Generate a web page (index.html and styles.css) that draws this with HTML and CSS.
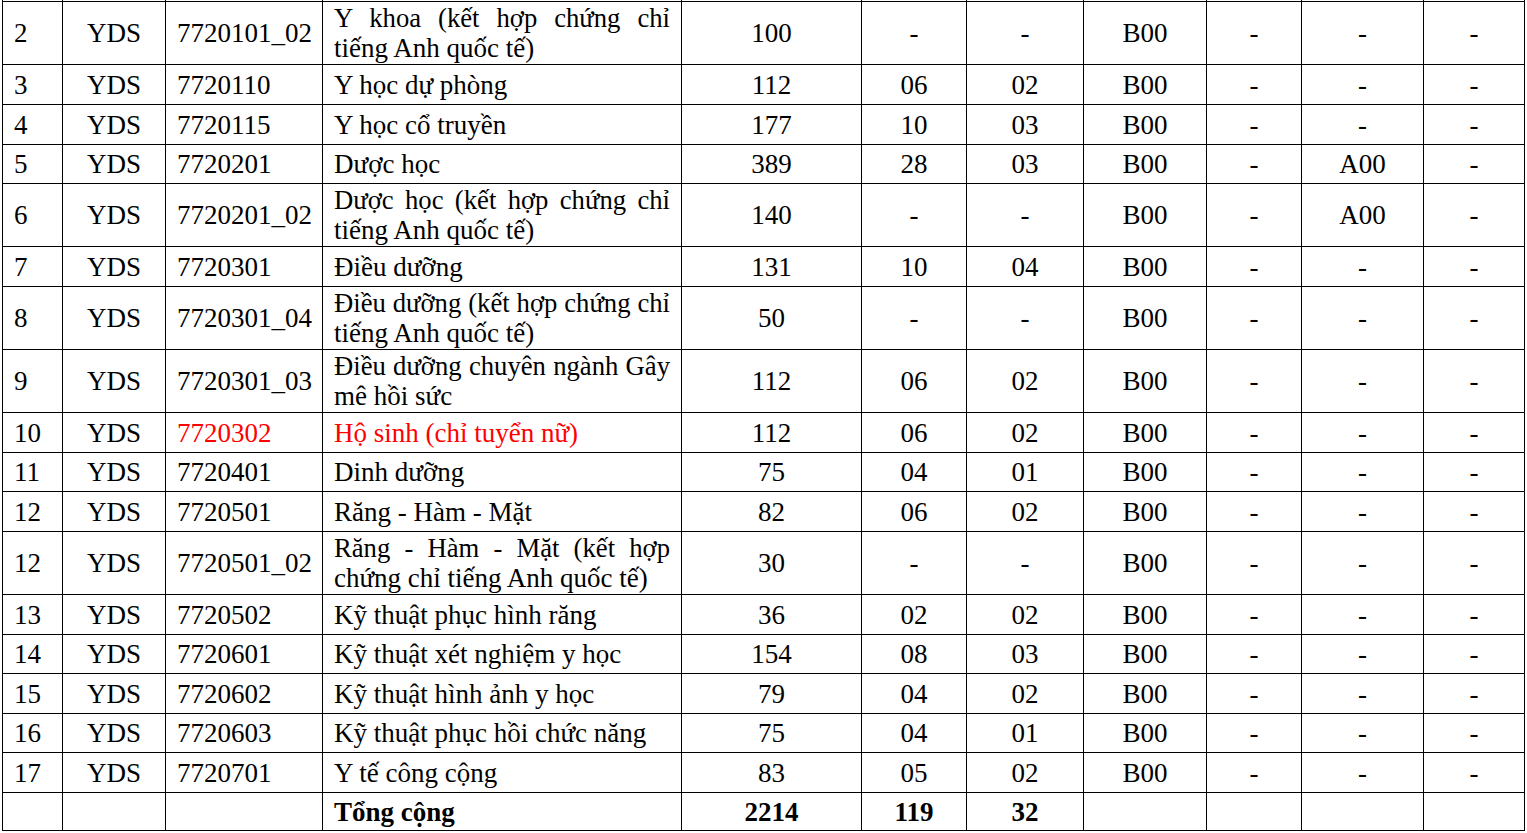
FILE: index.html
```html
<!DOCTYPE html>
<html lang="vi">
<head>
<meta charset="utf-8">
<title>Chỉ tiêu tuyển sinh</title>
<link rel="stylesheet" href="styles.css">
</head>
<body>
<table class="grid">
  <colgroup>
    <col class="c1"><col class="c2"><col class="c3"><col class="c4"><col class="c5"><col class="c6"><col class="c7"><col class="c8"><col class="c9"><col class="c10"><col class="c11">
  </colgroup>
  <tbody>
    <tr class="spacer"><td></td><td></td><td></td><td></td><td></td><td></td><td></td><td></td><td></td><td></td><td></td></tr>
    <tr class="two"><td class="stt">2</td><td class="ctr">YDS</td><td class="code">7720101_02</td><td class="name"><div class="l1">Y khoa (kết hợp chứng chỉ</div><div class="l2">tiếng Anh quốc tế)</div></td><td class="ctr">100</td><td class="ctr">-</td><td class="ctr">-</td><td class="ctr">B00</td><td class="ctr">-</td><td class="ctr">-</td><td class="ctr">-</td></tr>
    <tr class="h40"><td class="stt">3</td><td class="ctr">YDS</td><td class="code">7720110</td><td class="name">Y học dự phòng</td><td class="ctr">112</td><td class="ctr">06</td><td class="ctr">02</td><td class="ctr">B00</td><td class="ctr">-</td><td class="ctr">-</td><td class="ctr">-</td></tr>
    <tr class="h40"><td class="stt">4</td><td class="ctr">YDS</td><td class="code">7720115</td><td class="name">Y học cổ truyền</td><td class="ctr">177</td><td class="ctr">10</td><td class="ctr">03</td><td class="ctr">B00</td><td class="ctr">-</td><td class="ctr">-</td><td class="ctr">-</td></tr>
    <tr class="h39"><td class="stt">5</td><td class="ctr">YDS</td><td class="code">7720201</td><td class="name">Dược học</td><td class="ctr">389</td><td class="ctr">28</td><td class="ctr">03</td><td class="ctr">B00</td><td class="ctr">-</td><td class="ctr">A00</td><td class="ctr">-</td></tr>
    <tr class="two"><td class="stt">6</td><td class="ctr">YDS</td><td class="code">7720201_02</td><td class="name"><div class="l1">Dược học (kết hợp chứng chỉ</div><div class="l2">tiếng Anh quốc tế)</div></td><td class="ctr">140</td><td class="ctr">-</td><td class="ctr">-</td><td class="ctr">B00</td><td class="ctr">-</td><td class="ctr">A00</td><td class="ctr">-</td></tr>
    <tr class="h40"><td class="stt">7</td><td class="ctr">YDS</td><td class="code">7720301</td><td class="name">Điều dưỡng</td><td class="ctr">131</td><td class="ctr">10</td><td class="ctr">04</td><td class="ctr">B00</td><td class="ctr">-</td><td class="ctr">-</td><td class="ctr">-</td></tr>
    <tr class="two"><td class="stt">8</td><td class="ctr">YDS</td><td class="code">7720301_04</td><td class="name"><div class="l1">Điều dưỡng (kết hợp chứng chỉ</div><div class="l2">tiếng Anh quốc tế)</div></td><td class="ctr">50</td><td class="ctr">-</td><td class="ctr">-</td><td class="ctr">B00</td><td class="ctr">-</td><td class="ctr">-</td><td class="ctr">-</td></tr>
    <tr class="two"><td class="stt">9</td><td class="ctr">YDS</td><td class="code">7720301_03</td><td class="name"><div class="l1">Điều dưỡng chuyên ngành Gây</div><div class="l2">mê hồi sức</div></td><td class="ctr">112</td><td class="ctr">06</td><td class="ctr">02</td><td class="ctr">B00</td><td class="ctr">-</td><td class="ctr">-</td><td class="ctr">-</td></tr>
    <tr class="h40"><td class="stt">10</td><td class="ctr">YDS</td><td class="code red">7720302</td><td class="name red">Hộ sinh (chỉ tuyển nữ)</td><td class="ctr">112</td><td class="ctr">06</td><td class="ctr">02</td><td class="ctr">B00</td><td class="ctr">-</td><td class="ctr">-</td><td class="ctr">-</td></tr>
    <tr class="h39"><td class="stt">11</td><td class="ctr">YDS</td><td class="code">7720401</td><td class="name">Dinh dưỡng</td><td class="ctr">75</td><td class="ctr">04</td><td class="ctr">01</td><td class="ctr">B00</td><td class="ctr">-</td><td class="ctr">-</td><td class="ctr">-</td></tr>
    <tr class="h40"><td class="stt">12</td><td class="ctr">YDS</td><td class="code">7720501</td><td class="name">Răng - Hàm - Mặt</td><td class="ctr">82</td><td class="ctr">06</td><td class="ctr">02</td><td class="ctr">B00</td><td class="ctr">-</td><td class="ctr">-</td><td class="ctr">-</td></tr>
    <tr class="two"><td class="stt">12</td><td class="ctr">YDS</td><td class="code">7720501_02</td><td class="name"><div class="l1">Răng - Hàm - Mặt (kết hợp</div><div class="l2">chứng chỉ tiếng Anh quốc tế)</div></td><td class="ctr">30</td><td class="ctr">-</td><td class="ctr">-</td><td class="ctr">B00</td><td class="ctr">-</td><td class="ctr">-</td><td class="ctr">-</td></tr>
    <tr class="h40"><td class="stt">13</td><td class="ctr">YDS</td><td class="code">7720502</td><td class="name">Kỹ thuật phục hình răng</td><td class="ctr">36</td><td class="ctr">02</td><td class="ctr">02</td><td class="ctr">B00</td><td class="ctr">-</td><td class="ctr">-</td><td class="ctr">-</td></tr>
    <tr class="h39"><td class="stt">14</td><td class="ctr">YDS</td><td class="code">7720601</td><td class="name">Kỹ thuật xét nghiệm y học</td><td class="ctr">154</td><td class="ctr">08</td><td class="ctr">03</td><td class="ctr">B00</td><td class="ctr">-</td><td class="ctr">-</td><td class="ctr">-</td></tr>
    <tr class="h40"><td class="stt">15</td><td class="ctr">YDS</td><td class="code">7720602</td><td class="name">Kỹ thuật hình ảnh y học</td><td class="ctr">79</td><td class="ctr">04</td><td class="ctr">02</td><td class="ctr">B00</td><td class="ctr">-</td><td class="ctr">-</td><td class="ctr">-</td></tr>
    <tr class="h39"><td class="stt">16</td><td class="ctr">YDS</td><td class="code">7720603</td><td class="name">Kỹ thuật phục hồi chức năng</td><td class="ctr">75</td><td class="ctr">04</td><td class="ctr">01</td><td class="ctr">B00</td><td class="ctr">-</td><td class="ctr">-</td><td class="ctr">-</td></tr>
    <tr class="h40"><td class="stt">17</td><td class="ctr">YDS</td><td class="code">7720701</td><td class="name">Y tế công cộng</td><td class="ctr">83</td><td class="ctr">05</td><td class="ctr">02</td><td class="ctr">B00</td><td class="ctr">-</td><td class="ctr">-</td><td class="ctr">-</td></tr>
    <tr class="h38 total"><td></td><td></td><td></td><td class="name">Tổng cộng</td><td class="ctr">2214</td><td class="ctr">119</td><td class="ctr">32</td><td></td><td></td><td></td><td></td></tr>
  </tbody>
</table>
</body>
</html>
```

FILE: styles.css
```css
html, body {
  margin: 0;
  padding: 0;
  background: #ffffff;
}

body {
  font-family: "Liberation Serif", "Times New Roman", serif;
  font-size: 27px;
  color: #000000;
  overflow: hidden;
}

.grid {
  border-collapse: collapse;
  table-layout: fixed;
  width: 1523px;
  margin-left: 2px;
}

.c1 { width: 60px; }
.c2 { width: 103px; }
.c3 { width: 157px; }
.c4 { width: 359px; }
.c5 { width: 180px; }
.c6 { width: 105px; }
.c7 { width: 117px; }
.c8 { width: 123px; }
.c9 { width: 95px; }
.c10 { width: 122px; }
.c11 { width: 101px; }

.grid td {
  border: 1px solid #000000;
  padding: 0 11px;
  vertical-align: middle;
  line-height: 30px;
  white-space: nowrap;
  overflow: hidden;
}

.grid .spacer td {
  border-top: 0;
  height: 1px;
  padding: 0;
  line-height: 0;
  font-size: 0;
}

.h38 { height: 38px; }
.h39 { height: 39px; }
.h40 { height: 40px; }
.two { height: 63px; }

.stt { text-align: left; padding-left: 10px; }
.ctr { text-align: center; padding: 0 2px; }
.code { text-align: left; padding-left: 11px; }
.name { text-align: left; padding-left: 11px; }

.l1 {
  font-size: 26.67px;
  text-align: justify;
  text-align-last: justify;
  white-space: normal;
}
.l2 { text-align: left; }

.red { color: #ff0000; }

.total td { font-weight: bold; }
```
